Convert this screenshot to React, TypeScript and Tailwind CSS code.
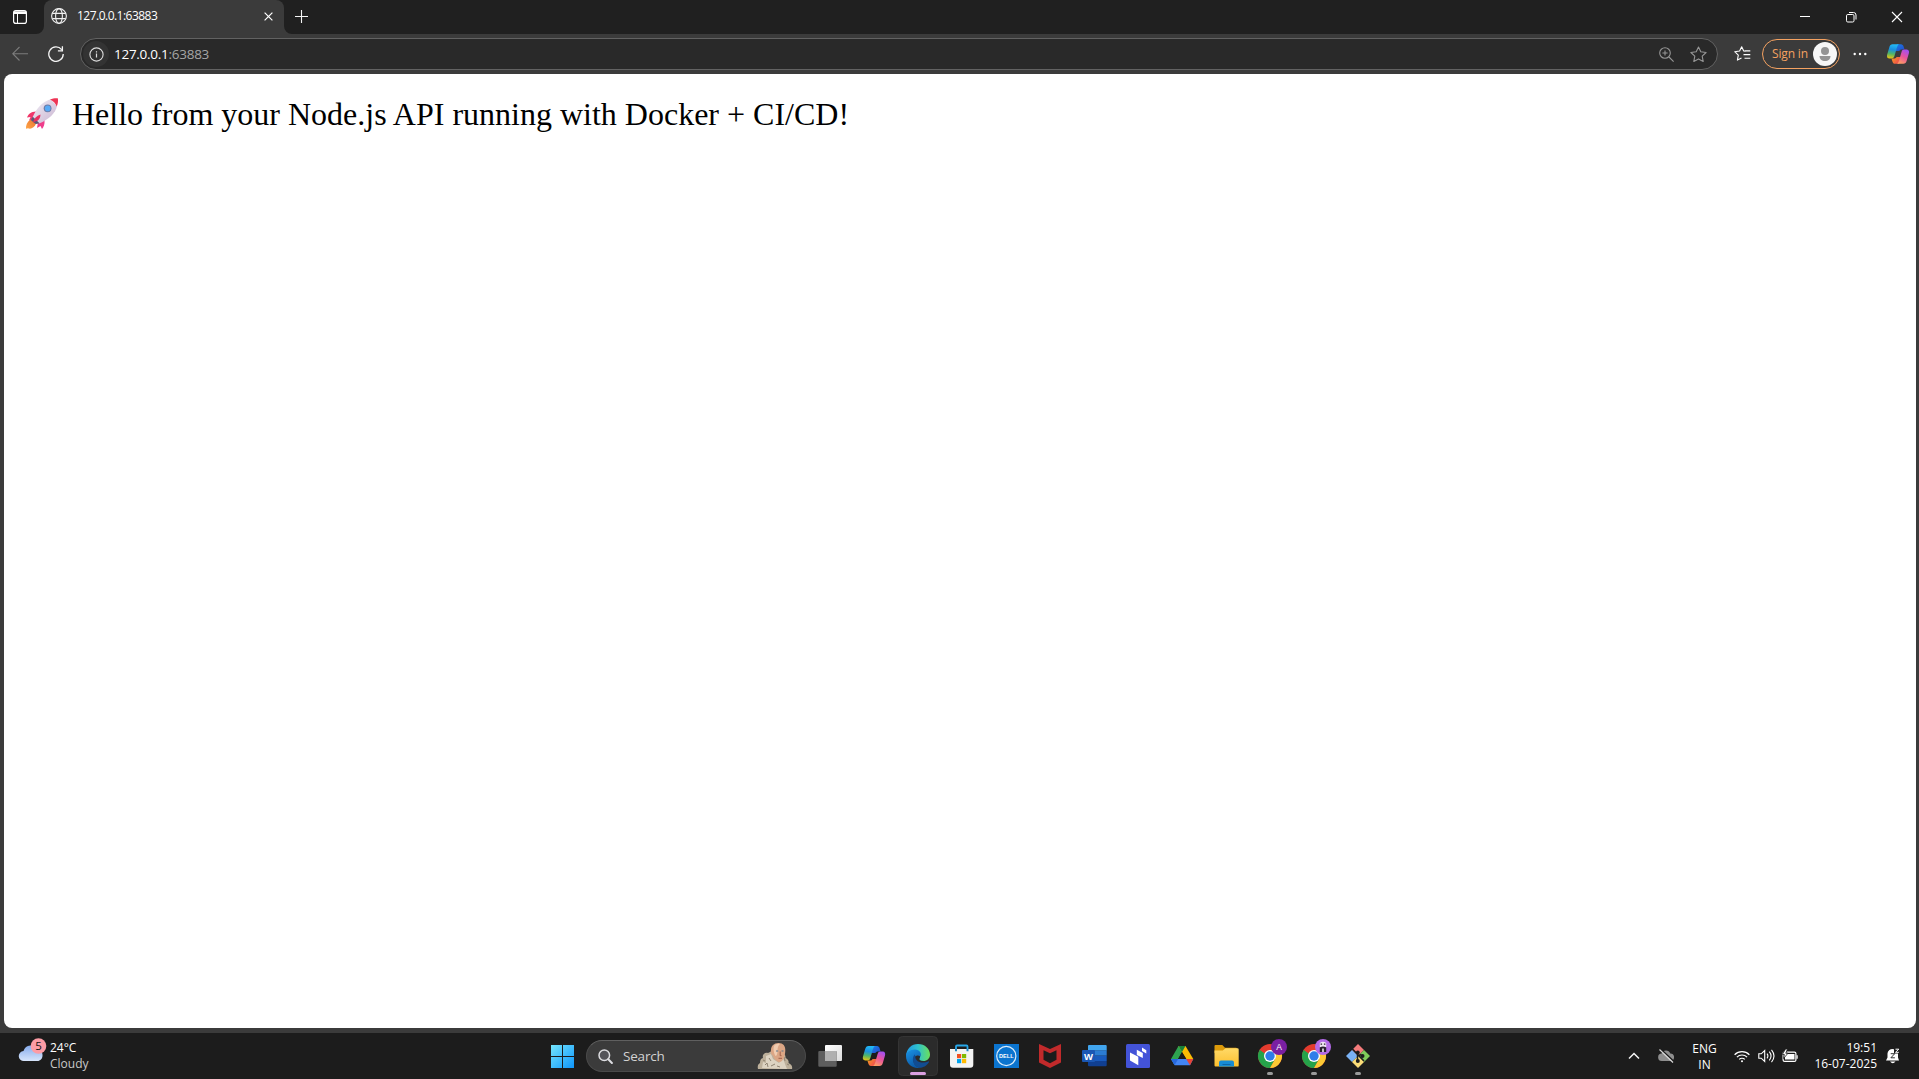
import React, { ReactNode } from "react";

const UI = "font-['Open_Sans','Noto_Sans',sans-serif]";

function CopilotMark({ id }: { id: string }) {
  return (
    <>
      <defs>
        <linearGradient id={id + "a"} x1="0.3" y1="0" x2="0.15" y2="1">
          <stop offset="0" stopColor="#22b8f5" />
          <stop offset="0.35" stopColor="#1b8fe0" />
          <stop offset="0.65" stopColor="#4fb568" />
          <stop offset="1" stopColor="#f2c40e" />
        </linearGradient>
        <linearGradient id={id + "b"} x1="0.7" y1="0" x2="0.2" y2="1">
          <stop offset="0" stopColor="#a44ff0" />
          <stop offset="0.45" stopColor="#e8539c" />
          <stop offset="1" stopColor="#ffa45c" />
        </linearGradient>
        <linearGradient id={id + "c"} x1="0" y1="0" x2="1" y2="1">
          <stop offset="0" stopColor="#1a7fe8" />
          <stop offset="1" stopColor="#2347c9" />
        </linearGradient>
        <linearGradient id={id + "d"} x1="0" y1="0" x2="1" y2="0.6">
          <stop offset="0" stopColor="#f5a01c" />
          <stop offset="1" stopColor="#f04a50" />
        </linearGradient>
      </defs>
      <path d="M10 0h4.200c1.500 0 2.200 1 2.600 2.200l1 3.300h-2.600c-1.400 0-2.100.5-2.500 1.500H9z" fill={`url(#${id}c)`} />
      <path d="M12.400 20H8.200C6.700 20 6 19 5.600 17.800l-1-3.300h2.600c1.400 0 2.100-.5 2.500-1.500h3.700z" fill={`url(#${id}d)`} />
      <path d="M5.700 0h7.100c-1.500.2-2 1.200-2.500 2.800L7.600 12c-.5 1.700-1.300 2.500-3 2.500H2.500C.3 14.500-.4 12.700.2 10.600L2.300 3.300C2.900 1.200 3.900 0 5.700 0z" fill={`url(#${id}a)`} />
      <path d="M16.700 20H9.600c1.500-.2 2-1.200 2.500-2.800L14.800 8c.5-1.700 1.300-2.500 3-2.500h2.100c2.200 0 2.900 1.800 2.300 3.900l-2.100 7.300c-.6 2.100-1.600 3.300-3.400 3.300z" fill={`url(#${id}b)`} />
    </>
  );
}

function TabBar() {
  return (
    <div className="flex h-[34px] w-full shrink-0 bg-[#202020]">
      <div className="flex w-[44px] items-center pl-[13px] pb-px">
        <svg width="14" height="14" viewBox="0 0 14 14" fill="none" stroke="#fff">
          <rect x="0.600" y="0.600" width="12.800" height="12.800" rx="2.200" strokeWidth="1.200" />
          <path d="M1 1.300h12v2.700H1z" fill="#fff" stroke="none" />
          <path d="M4.500 4v9" strokeWidth="1" />
        </svg>
      </div>
      <div className="relative flex w-[240px] items-center rounded-t-[8px] bg-[#3b3b3b] pl-[7px]">
        <svg className="absolute bottom-0 -left-2" width="8" height="8"><path d="M8 0v8H0a8 8 0 0 0 8-8z" fill="#3b3b3b" /></svg>
        <svg className="absolute bottom-0 -right-2" width="8" height="8"><path d="M0 0v8h8a8 8 0 0 1-8-8z" fill="#3b3b3b" /></svg>
        <svg className="-mt-[2px]" width="16" height="16" viewBox="0 0 16 16" fill="none" stroke="#f0f0f0" strokeWidth="1.100">
          <circle cx="8" cy="8" r="7.400" />
          <ellipse cx="8" cy="8" rx="3.400" ry="7.400" />
          <path d="M1.300 5.400h13.400M1.300 10.600h13.400" />
        </svg>
        <span className={`ml-[10px] -mt-[3px] w-[187px] text-[12px] leading-4 tracking-[-0.520px] text-white ${UI}`}>127.0.0.1:63883</span>
        <svg className="-mt-px" width="9" height="9" viewBox="0 0 9 9"><path d="M.6.6l7.800 7.800M8.400.6L.6 8.400" stroke="#fff" strokeWidth="1.200" /></svg>
      </div>
      <div className="flex flex-1 items-center pl-[10px] pb-[2px]">
        <svg width="15" height="15" viewBox="0 0 15 15"><path d="M7.500 1v13M1 7.500h13" stroke="#f4f4f4" strokeWidth="1.100" /></svg>
      </div>
      <div className="-mr-px flex w-[138px] shrink-0">
        <div className="flex flex-1 items-center justify-center">
          <svg width="12" height="12"><path d="M1 5.500h10" stroke="#fff" /></svg>
        </div>
        <div className="flex flex-1 items-center justify-center">
          <svg width="12" height="12" viewBox="0 0 12 12" fill="none" stroke="#fff"><rect x="1.500" y="3.500" width="7.500" height="7.500" rx="1.300" /><path d="M4 1.500h4.500a2.500 2.500 0 0 1 2.500 2.500v4.500" /></svg>
        </div>
        <div className="flex flex-1 items-center justify-center">
          <svg width="12" height="12" viewBox="0 0 12 12"><path d="M1 1l10 10M11 1L1 11" stroke="#fff" strokeWidth="1.100" /></svg>
        </div>
      </div>
    </div>
  );
}

function Toolbar() {
  return (
    <div className="flex h-[40px] w-full shrink-0 items-center bg-[#3b3b3b]">
      <div className="flex w-[80px] items-center gap-[20px] pl-[12px]">
        <svg width="16" height="16" viewBox="0 0 16 16" fill="none" stroke="#7c7c7c" strokeWidth="1.100"><path d="M16 7.700H.8M7.500 1L.8 7.700l6.700 6.800" /></svg>
        <svg width="16" height="16" viewBox="0 0 16 16" fill="none" stroke="#f5f5f5" strokeWidth="1.300"><path d="M13.600 3.600A7.200 7.200 0 1 0 15.200 8M14.400.3v4.500H9.900" /></svg>
      </div>
      <div className="flex h-[32px] w-[1638px] items-center rounded-full border border-[#626262] bg-[#292929] pl-[2px]">
        <div className="flex h-[26px] w-[26px] items-center justify-center rounded-full bg-[#333333]">
          <svg width="15" height="15" viewBox="0 0 15 15" fill="none" stroke="#ddd"><circle cx="7.500" cy="7.500" r="6.600" strokeWidth="1.100" /><path d="M7.500 6.600v4M7.500 4.200v1.300" strokeWidth="1.200" /></svg>
        </div>
        <span className={`ml-[5px] flex-1 text-[13.500px] leading-5 tracking-[-0.270px] text-[#a5a5a5] ${UI}`}><span className="text-white">127.0.0.1</span>:63883</span>
        <svg className="mr-[16px]" width="15" height="15" viewBox="0 0 15 15" fill="none" stroke="#969696" strokeWidth="1.100"><circle cx="6" cy="6" r="5.300" /><path d="M10 10l4.600 4.600M6 3.400v5.200M3.400 6h5.200" /></svg>
        <svg className="mr-[10px]" width="17" height="17" viewBox="0 0 17 17" fill="none" stroke="#969696" strokeWidth="1.100" strokeLinejoin="round"><path d="M8.500 1l2.300 4.800 5.300.7-3.900 3.700 1 5.300-4.700-2.600-4.700 2.600 1-5.300L.9 6.500l5.300-.7z" /></svg>
      </div>
      <svg className="ml-[16px]" width="17" height="16" viewBox="0 0 17 16" fill="none" stroke="#fff" strokeWidth="1.100" strokeLinejoin="round"><path d="M11.500 5.200L9.700 5 7.700.7 5.600 5l-4.900.7 3.600 3.400-.9 5L7.500 12M10.500 4.900h5.800M9.500 8.600h6.800M10.500 12.300h5.800" /></svg>
      <div className="ml-[11px] flex h-[30px] w-[78px] items-center justify-between rounded-full border border-[#f4a261] pl-[9px] pr-[2px]">
        <span className={`whitespace-nowrap text-[12px] leading-4 tracking-[-0.150px] text-[#f4a261] ${UI}`}>Sign in</span>
        <svg className="shrink-0" width="24" height="24" viewBox="0 0 24 24"><circle cx="12" cy="12" r="12" fill="#f7f7f7" /><circle cx="12" cy="9" r="4" fill="#949494" /><path d="M6.500 14h11c0 3-2.200 5-5.500 5s-5.500-2-5.500-5z" fill="#949494" /></svg>
      </div>
      <svg className="ml-[13px]" width="14" height="4" fill="#fff"><circle cx="1.700" cy="2" r="1.200" /><circle cx="7" cy="2" r="1.200" /><circle cx="12.300" cy="2" r="1.200" /></svg>
      <svg className="ml-[20px]" width="22" height="20" viewBox="0 0 22.400 20"><CopilotMark id="top" /></svg>
    </div>
  );
}

function Rocket() {
  return (
    <svg className="shrink-0" width="34" height="34" viewBox="0 0 34 34">
      <defs>
        <linearGradient id="rb" x1="0" y1="0" x2="1" y2="1"><stop offset="0.200" stopColor="#e9e2ee" /><stop offset="1" stopColor="#c9b4d1" /></linearGradient>
        <linearGradient id="rr" x1="0" y1="0" x2="1" y2="1"><stop offset="0" stopColor="#f0345f" /><stop offset="1" stopColor="#ee3f95" /></linearGradient>
        <linearGradient id="rf" x1="1" y1="0" x2="0" y2="1"><stop offset="0" stopColor="#e9752f" /><stop offset="1" stopColor="#ffa548" /></linearGradient>
      </defs>
      <path d="M5.500 22.500C2 25 .8 28.500 1 31.800c1.500-.8 2.500-.7 4 0 2-.5 5-2 6.100-5.300z" fill="url(#rf)" />
      <path d="M11 14.500C6 14.700 3.500 17 2 20.500l3.500-.5-1.500 3.500 6-2zM19.500 23c.5 4.500-1 7-2.500 9l-1.500-3-3.500 2 1-6z" fill="url(#rr)" />
      <path d="M25.500 2.200C19 4.300 12 9.500 7.500 20.500l6.500 6C24 22.500 30.500 16 32 9z" fill="url(#rb)" />
      <path d="M7.800 19.800c-1 1.300-1.500 2.200-1.900 3.500l4.800 3.700c1.400-.2 2.500-.4 3.800-.8z" fill="#5d5674" />
      <path d="M25 2.400C28 1.200 31 .9 32.800 1.300 33.300 3.700 33 6.500 31.800 9.500c-1.300-3.300-3.600-5.800-6.800-7.100z" fill="#ee3555" />
      <path d="M15.500 17.500c-4 1.200-6.500 4-7.500 8 1.500-.7 3-1.200 4.500-1.800 2-1.300 3-3.700 3-6.200z" fill="#e8305f" />
      <circle cx="22.600" cy="11.300" r="3.900" fill="#6c7ba6" />
      <circle cx="22.700" cy="11.400" r="2.800" fill="#58a9f5" />
    </svg>
  );
}

function Cell({ children, dot }: { children: ReactNode; dot?: boolean }) {
  return (
    <svg className="shrink-0" width="44" height="46" viewBox="0 0 44 46">
      {children}
      {dot && <rect x="19" y="39" width="6" height="3" rx="1.500" fill="#9a9a9a" />}
    </svg>
  );
}

function Chrome() {
  return (
    <>
      <circle cx="22" cy="23" r="12" fill="#e33b2e" />
      <path d="M11.600 17A12 12 0 0 0 22 35L27.200 26H22z" fill="#25a34a" />
      <path d="M11.600 17l5.200 9h8z" fill="#25a34a" />
      <path d="M32.400 17H22l5.200 9L22 35A12 12 0 0 0 32.400 17z" fill="#fcc934" />
      <circle cx="22" cy="23" r="6" fill="#fff" />
      <circle cx="22" cy="23" r="4.700" fill="#2f7de9" />
    </>
  );
}

function AppIcons() {
  return (
    <div className="flex">
      <Cell>
        <defs><linearGradient id="tv" x1="0" y1="0" x2="1" y2="1"><stop offset="0" stopColor="#fff" /><stop offset="1" stopColor="#dcdcdc" /></linearGradient></defs>
        <rect x="17" y="12" width="17" height="16" rx="1" fill="url(#tv)" />
        <rect x="10.300" y="18" width="18.400" height="15.700" rx="1" fill="#5e5e5e" />
        <path d="M17 18h11.700v10H17z" fill="#b0b0b0" />
      </Cell>
      <Cell><g transform="translate(10.800 13)"><CopilotMark id="task" /></g></Cell>
      <Cell>
        <defs>
          <linearGradient id="e1" x1="0" y1="0.300" x2="1" y2="0.300"><stop offset="0" stopColor="#2097e6" /><stop offset="0.500" stopColor="#2fc3cc" /><stop offset="1" stopColor="#6be05a" /></linearGradient>
          <linearGradient id="e2" x1="0" y1="0" x2="0.500" y2="1"><stop offset="0" stopColor="#1a94e6" /><stop offset="1" stopColor="#0c59a6" /></linearGradient>
        </defs>
        <rect x="2.500" y="3.500" width="39" height="39" rx="4" fill="#2b2b2b" stroke="#343434" />
        <path d="M10 23C10.500 15.500 15.500 11 22 11c7 0 12 5 12 10.500 0 4-3 6.500-6.500 6.500-3 0-4.500-1.300-4-2.300 1.600-2.300.5-6.700-4.500-6.700-4.500 0-8 2-9 4z" fill="url(#e1)" />
        <path d="M10 23c0-3.300 4-6.500 8.800-6.500 5.200 0 7 4 5.700 7-3-2.500-7.500 0-7 4.500.6 4.500 4.500 6.500 7 6.700C16.500 36.300 10 30.500 10 23z" fill="url(#e2)" />
        <path d="M18.700 21.500c-3.500 3.500-2 12 5 13.300 4 0 7.500-2.500 9.300-5.800.3-.6-.2-.8-.7-.5-5.500 2.600-12.800.5-13-4.500 0-1 .2-1.800-.6-2.500z" fill="#114c91" />
        <rect x="14" y="39" width="16" height="3" rx="1.500" fill="#dba0e2" />
      </Cell>
      <Cell>
        <path d="M16 18v-4.500q0-1 1-1h9.500q1 0 1 1V18" fill="none" stroke="#28a8ea" strokeWidth="1.800" />
        <path d="M10 16h23.300v15.700a3 3 0 0 1-3 3H13a3 3 0 0 1-3-3z" fill="#f3f3f3" />
        <path d="M15 16h2v2.300h-2zM26.500 16h2v2.300h-2z" fill="#1d85c4" />
        <path d="M17 21h4.200v4.200H17z" fill="#f25022" /><path d="M22 21h4.200v4.200H22z" fill="#7fba00" /><path d="M17 26h4.200v4.200H17z" fill="#00a4ef" /><path d="M22 26h4.200v4.200H22z" fill="#ffb900" />
      </Cell>
      <Cell>
        <rect x="10" y="11" width="25" height="24" fill="#0b74cf" />
        <circle cx="22.300" cy="23" r="9.600" fill="none" stroke="#d9ebfa" strokeWidth="1.200" />
        <text x="22.300" y="25" textAnchor="middle" fontSize="5.800" fontWeight="700" fill="#fff" fontFamily="Liberation Sans, sans-serif" textLength="14.500" lengthAdjust="spacingAndGlyphs">DELL</text>
      </Cell>
      <Cell>
        <path d="M11 11l11 5 11-5v18.500L22 35l-11-5.500z" fill="#c12a2b" />
        <path d="M15.500 17.300l6.500 3 6.500-3v9.500L22 30.300l-6.500-3.500z" fill="#1c1c1c" />
      </Cell>
      <Cell>
        <path d="M17 12h16.700a1 1 0 0 1 1 1v4.500H16V13a1 1 0 0 1 1-1z" fill="#41a5ee" />
        <path d="M16 17.300h18.700v5.400H16z" fill="#2b7cd3" /><path d="M16 22.700h18.700V28H16z" fill="#185abd" /><path d="M16 28h18.700v4.300a1 1 0 0 1-1 1H17a1 1 0 0 1-1-1z" fill="#103f91" />
        <rect x="10" y="17" width="13" height="12" rx="1" fill="#1a57b4" />
        <text x="16.400" y="26.500" textAnchor="middle" fontSize="9.500" fontWeight="700" fill="#fff" fontFamily="Liberation Sans, sans-serif">W</text>
      </Cell>
      <Cell>
        <rect x="10" y="11" width="24" height="24" rx="1.500" fill="#4353d8" />
        <path d="M14 19.500l8.300 4.300v8.400L14 27.600zM20.800 16.800l6 3.300v5l-6-3.200zM26 14.500l4.300 2.700v3.300L26 18z" fill="#fff" />
      </Cell>
      <Cell>
        <path d="M18.500 13h7l-3.500 6-7.400 13L11 26z" fill="#2ea350" />
        <path d="M18.500 13h7L33.300 26h-7z" fill="#fbbc04" />
        <path d="M18.500 13h7L22 19z" fill="#188038" />
        <path d="M14.700 26h18.600L30 32.300H14.700L11 26z" fill="#4285f4" />
        <path d="M11 26h7.200l-3.600 6.300z" fill="#2768de" /><path d="M26.200 26h7.100L30 32.300z" fill="#ea4335" />
        <path d="M22 19.200l4.200 6.800h-8z" fill="#1c1c1c" />
      </Cell>
      <Cell>
        <defs><linearGradient id="fo" x1="0" y1="0" x2="0" y2="1"><stop offset="0" stopColor="#ffda68" /><stop offset="1" stopColor="#fcbf2d" /></linearGradient></defs>
        <path d="M10.500 13a1 1 0 0 1 1-1h6.800l2.700 2.700h11a1 1 0 0 1 1 1V20H10.500z" fill="#dc9a0a" />
        <path d="M10.500 17.500h8.300l2.700-2.300h12a1.200 1.200 0 0 1 1.200 1.200v16a1.200 1.200 0 0 1-1.200 1.200h-22a1 1 0 0 1-1-1z" fill="url(#fo)" />
        <path d="M15 33.600v-4.200a2 2 0 0 1 2-2h11a2 2 0 0 1 2 2v4.200z" fill="#168bd4" /><path d="M18.500 31h8v1h-8z" fill="#0c67a7" />
      </Cell>
      <Cell dot>
        <Chrome /><circle cx="31" cy="14" r="8" fill="#7a1fa2" />
        <text x="31" y="17" textAnchor="middle" fontSize="8.500" fill="#fff" fontFamily="Liberation Sans, sans-serif">A</text>
      </Cell>
      <Cell dot>
        <Chrome /><circle cx="31" cy="14" r="8" fill="#b36ae8" />
        <path d="M27.800 10q3.200-2.600 6.400 0v4h-6.400z" fill="#efe6f3" />
        <path d="M28.600 10.500h1.500v1.200h-1.500zM31.900 10.500h1.500v1.200h-1.500z" fill="#29222e" />
        <path d="M27.800 14.500q3.200-2 6.400 0v4.500h-6.400z" fill="#29222e" />
        <path d="M30.200 15.500h1.600v3.500h-1.600z" fill="#efe6f3" />
      </Cell>
      <Cell dot>
        <path d="M22 11l6 6-6 6-6-6z" fill="#f47b7b" /><path d="M28 17l6 6-6 6-6-6z" fill="#80cc5b" /><path d="M16 17l6 6-6 6-6-6z" fill="#7ab2f5" /><path d="M22 23l6 6-6 6-6-6z" fill="#fbdc78" />
        <path d="M16.200 15.800L28 28M21.500 19v9.500M21.500 23l4-1.500" stroke="#1d1d1d" strokeWidth="1.500" fill="none" />
        <circle cx="21.800" cy="19.500" r="1.900" fill="#1d1d1d" /><circle cx="21.800" cy="28" r="2" fill="#1d1d1d" /><circle cx="26.500" cy="23" r="2" fill="#1d1d1d" />
      </Cell>
    </div>
  );
}

function SearchBox() {
  return (
    <div className="flex h-[32px] w-[220px] items-center rounded-full border border-[#4a4a4a] border-t-[#606060] bg-[#3b3b3b] pl-[11px] pr-[12px]">
      <svg width="15" height="15" viewBox="0 0 15 15" fill="none" stroke="#dcdce0" strokeLinecap="round"><circle cx="6.300" cy="6.300" r="5.300" strokeWidth="1.500" fill="#54545a" /><path d="M10.300 10.300l3.600 3.700" strokeWidth="2" /></svg>
      <span className={`ml-[10px] flex-1 text-[13.500px] leading-5 tracking-[-0.200px] text-[#d2d2d2] ${UI}`}>Search</span>
      <svg width="36" height="28" viewBox="0 0 36 28">
        <path d="M1 27c-.8-3 .2-5 2-6 0-3 1-4.500 3-5-1-3 1.500-6 5-5l4-2 10 2c2.500.5 4 3 3.500 5 2.500 1 3.500 3 3 5 3 1.500 4.200 3.500 3.500 6z" fill="#bdb09b" />
        <path d="M5 26l1-6 3 1 0-7 5-2 2 5 6 4 4-5 2 6 2 5z" fill="#ddd3c2" />
        <path d="M8 23l2-2 1 4M12 16l2 3M27 15l1 4M30 22l2 1M14 24l4-2M6 18l2 1M20 24l3 1" stroke="#8f8372" strokeWidth="1" fill="none" />
        <path d="M14 8C14 4 17 1 21.300 1c5 0 7.200 3 7 7.500-.2 5-1.700 10.500-5.300 11.500-3 0-5.800-2.500-7-6.500-1.700-.5-2.700-3.700-2-5.500z" fill="#dba685" />
        <path d="M17 4c1-2 4-2.500 6-2-2 1.500-2.500 4-2.500 7s-1 5-2 5c-1.500-2-2.500-7-1.500-10z" fill="#f0ccb0" />
        <path d="M19 9h2.200M24.500 9h2" stroke="#5b7487" strokeWidth="1.200" /><path d="M23.200 9.500v4.200h1.300M21.500 16.300h3.500" stroke="#a0604a" strokeWidth="1" fill="none" />
      </svg>
    </div>
  );
}

function Tray() {
  return (
    <div className={`flex h-full items-center text-[12px] leading-4 text-white ${UI}`}>
      <svg width="12" height="8" viewBox="0 0 12 8"><path d="M1 6.500l5-5 5 5" fill="none" stroke="#f3f3f3" strokeWidth="1.500" /></svg>
      <svg className="ml-[18px]" width="16" height="14" viewBox="0 0 16 14"><path d="M4 12a3.700 3.700 0 0 1-.3-7.400A4.600 4.600 0 0 1 12.300 4.500a3.700 3.700 0 0 1 0 7.500z" fill="#8e8e8e" /><path d="M2.500 0L16 12.500" stroke="#1c1c1c" strokeWidth="1.500" /><path d="M1.500.5L15 13.500" stroke="#d8d8d8" strokeWidth="1.200" /></svg>
      <div className="ml-[17px] flex w-[27px] flex-col items-center pt-[2px]"><span>ENG</span><span>IN</span></div>
      <svg className="ml-[16px]" width="16" height="13" viewBox="0 0 16 13" fill="none" stroke="#fff" strokeWidth="1.200"><path d="M.6 4.700a10.500 10.500 0 0 1 14.800 0M2.900 7.100a7.200 7.200 0 0 1 10.200 0M5.200 9.400a4 4 0 0 1 5.600 0" /><circle cx="8" cy="11.300" r="1" fill="#fff" stroke="none" /></svg>
      <svg className="ml-[8px]" width="17" height="14" viewBox="0 0 17 14" fill="none" stroke="#fff" strokeWidth="1.100"><path d="M.8 4.800h2.400L6.700 1.500v11L3.200 9.200H.8zM9 4.600q1.800 2.400 0 4.800M11.300 2.700q3.500 4.300 0 8.600M13.500.8q5 6.200 0 12.400" /></svg>
      <svg className="ml-[7px]" width="17" height="14" viewBox="0 0 17 14"><rect x="1.100" y="3.100" width="12.800" height="9.300" rx="1.500" fill="none" stroke="#fff" strokeWidth="1.200" /><path d="M3 5h9.500v5.500H3zM14.500 6.300h1.200v3.400h-1.200z" fill="#fff" /><path d="M3.500 0L.3 5.500h2L1.500 9.500 6 4.200H3.800L5.500 0z" fill="#fff" stroke="#1c1c1c" strokeWidth="0.800" /></svg>
      <div className="ml-[13px] flex w-[65px] flex-col items-end whitespace-nowrap"><span>19:51</span><span>16-07-2025</span></div>
      <svg className="ml-[9px] mr-[19px]" width="14" height="16" viewBox="0 0 14 16"><path d="M0 12.500L1.500 9.500V6.500A5 5 0 0 1 8 1.200V5.500h4v4l1 3zM4 13.600h5.500Q6.800 17 4 13.600z" fill="#fff" /><path d="M4.700 5.700h4L4.900 9.800h4" fill="none" stroke="#1c1c1c" strokeWidth="0.900" /><path d="M9.500 1.200h3.300L9.500 4.300h3.300" fill="none" stroke="#fff" strokeWidth="1" /></svg>
    </div>
  );
}

function Taskbar() {
  return (
    <div className="flex h-[46px] w-full shrink-0 items-center bg-[#1c1c1c]">
      <div className={`flex w-[551px] items-center pl-[18px] text-[12px] leading-4 text-white ${UI}`}>
        <svg width="29" height="46" viewBox="0 0 29 46">
          <defs><linearGradient id="cl" x1="0" y1="0" x2="0" y2="1"><stop offset="0" stopColor="#86abec" /><stop offset="1" stopColor="#d7e5fb" /></linearGradient></defs>
          <path d="M6 28a5 5 0 0 1-.5-10A8 8 0 0 1 20 16.500 6 6 0 0 1 20.500 28z" fill="url(#cl)" />
          <circle cx="20.500" cy="13" r="7.800" fill="#fd9ca5" />
          <text x="20.500" y="17.300" fontSize="11.500" textAnchor="middle" fill="#151515">5</text>
        </svg>
        <div className="ml-[3px] flex flex-col"><span>24°C</span><span className="text-[#c9c9c9]">Cloudy</span></div>
      </div>
      <svg className="mr-[12px]" width="23" height="23" viewBox="0 0 23 23">
        <defs><linearGradient id="wi" gradientUnits="userSpaceOnUse" x1="0" y1="0" x2="23" y2="23"><stop offset="0" stopColor="#74e6fd" /><stop offset="1" stopColor="#0e95fb" /></linearGradient></defs>
        <path d="M0 0h11v11H0zM12 0h11v11H12zM0 12h11v11H0zM12 12h11v11H12z" fill="url(#wi)" />
      </svg>
      <SearchBox />
      <div className="ml-[2px] flex-1"><AppIcons /></div>
      <Tray />
    </div>
  );
}

export default function App() {
  return (
    <div className="flex h-screen w-full flex-col overflow-hidden bg-[#3b3b3b]">
      <TabBar />
      <Toolbar />
      <main className="mr-[3px] mb-[5px] ml-[4px] flex flex-1 items-start rounded-[8px] bg-white pl-[21px] pt-[23px]">
        <Rocket />
        <p className="-mt-px ml-[13px] whitespace-nowrap font-['Liberation_Serif',serif] text-[32px] leading-[36px] text-black">Hello from your Node.js API running with Docker + CI/CD!</p>
      </main>
      <Taskbar />
    </div>
  );
}
